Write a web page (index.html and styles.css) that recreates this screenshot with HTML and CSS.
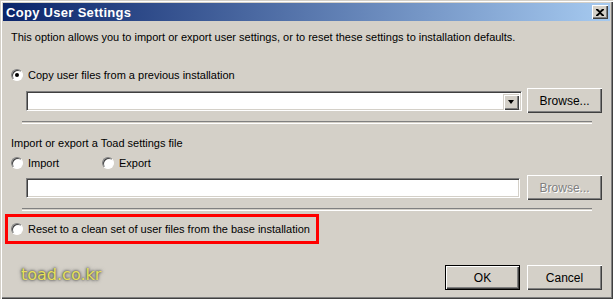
FILE: index.html
```html
<!DOCTYPE html>
<html lang="en">
<head>
    <meta charset="UTF-8">
    <title>Copy User Settings</title>
    <link rel="stylesheet" href="styles.css">
</head>
<body>

    <div class="window">
        <div class="titlebar">
            <span class="title">Copy User Settings</span>
            <span class="close-btn">
                <svg width="8" height="7" viewBox="0 0 8 7"><path d="M0 0h2l2 2 2-2h2v1L5 3.5 8 6v1H6L4 5 2 7H0V6l3-2.5L0 1z" fill="#000"/></svg>
            </span>
        </div>

        <div class="content">
            <div class="intro">This option allows you to import or export user settings, or to reset these settings to installation defaults.</div>

            <!-- Copy from previous installation -->
            <label class="radio-row first">
                <span class="radio checked"></span>
                Copy user files from a previous installation
            </label>
            <div class="field-row combo-row">
                <div class="combo">
                    <span class="combo-arrow"></span>
                </div>
                <button class="btn">Browse...</button>
            </div>
            <div class="separator"></div>

            <!-- Import / export -->
            <div class="group-label">Import or export a Toad settings file</div>
            <div class="radio-pair">
                <label class="radio-row"><span class="radio"></span>Import</label>
                <label class="radio-row"><span class="radio"></span>Export</label>
            </div>
            <div class="field-row">
                <div class="textbox"></div>
                <button class="btn disabled">Browse...</button>
            </div>
            <div class="separator"></div>

            <!-- Reset -->
            <div class="highlight">
                <label class="radio-row"><span class="radio"></span>Reset to a clean set of user files from the base installation</label>
            </div>

            <div class="footer">
                <div class="watermark">toad.co.kr</div>
                <div class="buttons">
                    <button class="btn default">OK</button>
                    <button class="btn">Cancel</button>
                </div>
            </div>
        </div>
    </div>

</body>
</html>
```

FILE: styles.css
```css
body {
    margin: 0;
    padding: 0;
    font-family: "Liberation Sans", Arial, sans-serif;
    font-size: 11px;
    color: #000;
    background: #d4d0c8;
}

.window {
    width: 613px;
    height: 299px;
    box-sizing: border-box;
    padding: 3px;
    background: #d4d0c8;
    box-shadow: inset 1px 1px #d4d0c8, inset 2px 2px #fff, inset -1px -1px #404040, inset -2px -2px #808080;
    display: flex;
    flex-direction: column;
}

.titlebar {
    height: 18px;
    display: flex;
    align-items: center;
    justify-content: space-between;
    padding: 0 2px 0 3px;
    background: linear-gradient(to right, #0a246a, #a6caf0);
}

.title {
    color: #fff;
    font-weight: bold;
    font-size: 13px;
    letter-spacing: 0.3px;
}

.close-btn {
    width: 16px;
    height: 14px;
    box-sizing: border-box;
    display: flex;
    align-items: center;
    justify-content: center;
    background: #d4d0c8;
    box-shadow: inset 1px 1px #fff, inset -1px -1px #404040, inset -2px -2px #808080;
}

.content {
    flex: 1;
    padding: 0 8px 0 8px;
    display: flex;
    flex-direction: column;
}

.intro {
    margin-top: 10px;
    line-height: 13px;
}

.radio-row {
    display: flex;
    align-items: center;
    gap: 5px;
    line-height: 14px;
    white-space: nowrap;
}

.radio-row.first {
    margin-top: 24px;
}

.radio {
    width: 12px;
    height: 12px;
    box-sizing: border-box;
    border-radius: 50%;
    background: #fff;
    border: 1px solid;
    border-color: #808080 #fff #fff #808080;
    box-shadow: inset 1px 1px #404040;
    position: relative;
    flex: none;
}

.radio.checked::after {
    content: "";
    position: absolute;
    left: 3px;
    top: 3px;
    width: 4px;
    height: 4px;
    border-radius: 50%;
    background: #000;
}

.field-row {
    display: flex;
    align-items: center;
    gap: 5px;
    margin-left: 15px;
}

.combo-row {
    margin-top: 6px;
}

.combo,
.textbox {
    height: 20px;
    box-sizing: border-box;
    background: #fff;
    border: 1px solid;
    border-color: #808080 #fff #fff #808080;
    box-shadow: inset 1px 1px #404040, inset -1px -1px #d4d0c8;
}

.combo {
    width: 497px;
    display: flex;
    justify-content: flex-end;
    padding: 2px;
}

.textbox {
    width: 495px;
    margin-right: 2px;
}

.combo-arrow {
    width: 16px;
    height: 16px;
    box-sizing: border-box;
    background: #d4d0c8;
    box-shadow: inset 1px 1px #d4d0c8, inset 2px 2px #fff, inset -1px -1px #404040, inset -2px -2px #808080;
    display: flex;
    align-items: center;
    justify-content: center;
}

.combo-arrow::after {
    content: "";
    border-left: 3.5px solid transparent;
    border-right: 3.5px solid transparent;
    border-top: 4px solid #000;
}

.btn {
    width: 75px;
    height: 25px;
    padding: 0;
    border: none;
    font-family: inherit;
    font-size: 12px;
    color: #000;
    background: #d4d0c8;
    box-shadow: inset 1px 1px #fff, inset -1px -1px #404040, inset -2px -2px #808080;
}

.btn.disabled {
    color: #808080;
    text-shadow: 1px 1px #fff;
}

.btn.default {
    box-shadow: inset 0 0 0 1px #000, inset 2px 2px #fff, inset -2px -2px #404040, inset -3px -3px #808080;
}

.separator {
    margin: 8px 10px 0 11px;
    height: 1px;
    border-top: 1px solid #808080;
    border-bottom: 1px solid #fff;
}

.group-label {
    margin-top: 12px;
    line-height: 14px;
}

.radio-pair {
    display: flex;
    gap: 44px;
    margin-top: 6px;
}

.radio-pair .radio-row {
    width: 47px;
}

.radio-pair + .field-row {
    margin-top: 5px;
}

.highlight {
    margin: 3px 0 0 -6px;
    width: 314px;
    height: 30px;
    box-sizing: border-box;
    border: 3px solid #ff0000;
    display: flex;
    align-items: center;
    padding-left: 3px;
}

.footer {
    margin-top: auto;
    margin-bottom: 6px;
    display: flex;
    justify-content: space-between;
    align-items: center;
}

.watermark {
    margin-left: 10px;
    margin-top: -6px;
    font-family: "DejaVu Sans", sans-serif;
    font-size: 16px;
    color: #e6e05a;
    text-shadow: 0 0 2px #555, 0 0 3px #666, 0 0 4px #777;
}

.buttons {
    display: flex;
    gap: 7px;
}
```
